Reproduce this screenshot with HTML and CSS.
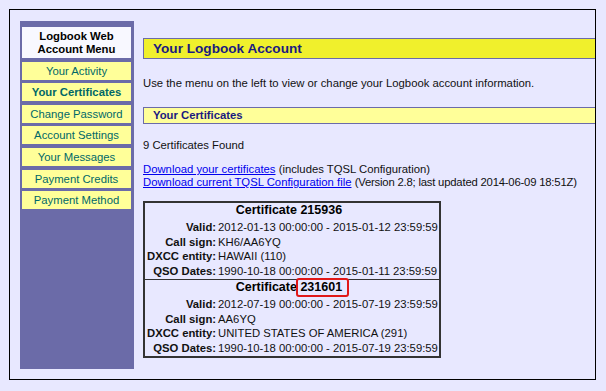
FILE: index.html
```html
<!DOCTYPE html>
<html lang="en">
<head>
  <meta charset="UTF-8">
  <meta name="viewport" content="width=device-width, initial-scale=1.0">
  <title>Your Logbook Account</title>
  <link rel="stylesheet" href="styles.css">
</head>
<body>

  <div class="page">

    <!-- Account menu -->
    <div class="sidebar">
      <div class="menu-title">Logbook Web<br>Account Menu</div>
      <a href="#" class="menu-item">Your Activity</a>
      <a href="#" class="menu-item current">Your Certificates</a>
      <a href="#" class="menu-item">Change Password</a>
      <a href="#" class="menu-item">Account Settings</a>
      <a href="#" class="menu-item">Your Messages</a>
      <a href="#" class="menu-item">Payment Credits</a>
      <a href="#" class="menu-item">Payment Method</a>
    </div>

    <!-- Main content -->
    <div class="main">
      <div class="page-title">Your Logbook Account</div>
      <p class="intro">Use the menu on the left to view or change your Logbook account information.</p>

      <div class="section-title">Your Certificates</div>
      <p class="found">9 Certificates Found</p>
      <p class="downloads">
        <a href="#">Download your certificates</a> (includes TQSL Configuration)<br>
        <a href="#">Download current TQSL Configuration file</a> <span class="version">(Version 2.8; last updated 2014-06-09 18:51Z)</span>
      </p>

      <table class="certs">
        <tr>
          <td>
            <div class="cert-title">Certificate 215936</div>
            <table class="cert-info">
              <tr><th>Valid:</th><td>2012-01-13 00:00:00 - 2015-01-12 23:59:59</td></tr>
              <tr><th>Call sign:</th><td>KH6/AA6YQ</td></tr>
              <tr><th>DXCC entity:</th><td>HAWAII (110)</td></tr>
              <tr><th>QSO Dates:</th><td>1990-10-18 00:00:00 - 2015-01-11 23:59:59</td></tr>
            </table>
          </td>
        </tr>
        <tr>
          <td class="next">
            <div class="cert-title">Certificate <span class="marked">231601</span></div>
            <table class="cert-info">
              <tr><th>Valid:</th><td>2012-07-19 00:00:00 - 2015-07-19 23:59:59</td></tr>
              <tr><th>Call sign:</th><td>AA6YQ</td></tr>
              <tr><th>DXCC entity:</th><td>UNITED STATES OF AMERICA (291)</td></tr>
              <tr><th>QSO Dates:</th><td>1990-10-18 00:00:00 - 2015-07-19 23:59:59</td></tr>
            </table>
          </td>
        </tr>
      </table>
    </div>

  </div>

</body>
</html>
```

FILE: styles.css
```css
/* General */
body {
  margin: 0;
  background: #E8E8FF;
  font-family: "Liberation Sans", Arial, sans-serif;
  font-size: 11.3px;
  line-height: 13px;
  color: #111;
}

p {
  margin: 0;
}

a {
  color: #0000EE;
}

/* Outer frame */
.page {
  display: flex;
  box-sizing: border-box;
  width: 587px;
  margin: 9px 0 0 9px;
  padding: 11px 0 10px 10px;
  border: 1px solid #000;
}

/* Account menu */
.sidebar {
  flex-shrink: 0;
  box-sizing: border-box;
  width: 114px;
  padding: 6px 3px 0 2px;
  background: #6B6BA8;
}

.menu-title {
  box-sizing: border-box;
  height: 31px;
  padding-top: 3px;
  background: #F8F8FF;
  color: #000;
  font-weight: bold;
  text-align: center;
}

.menu-item {
  display: block;
  height: 18px;
  line-height: 18px;
  margin-top: 3.6px;
  background: #FFFF99;
  color: #006868;
  text-align: center;
  text-decoration: none;
}

.menu-item.current {
  font-weight: bold;
}

/* Main column */
.main {
  flex: 1;
  padding: 17px 0 11px 9px;
}

.page-title {
  height: 19px;
  line-height: 19px;
  padding-left: 9px;
  background: #F0F02C;
  border: 1px solid #6B6BA8;
  border-right: none;
  color: #1A1A80;
  font-size: 13.6px;
  font-weight: bold;
}

.intro {
  margin-top: 18px;
}

.section-title {
  height: 15px;
  line-height: 15px;
  margin-top: 16.5px;
  padding-left: 9px;
  background: #FFFF99;
  border: 1px solid #6B6BA8;
  border-right: none;
  color: #1A1A80;
  font-weight: bold;
}

.found {
  margin-top: 15.5px;
}

.downloads {
  margin-top: 11.3px;
  white-space: nowrap;
}

.version {
  letter-spacing: -0.2px;
}

/* Certificate list */
.certs {
  margin-top: 12px;
  border: 2px solid #333;
  border-spacing: 0;
}

.certs > tbody > tr > td {
  padding: 0 0 1px 0;
}

.certs td.next {
  border-top: 1px solid #333;
}

.cert-title {
  height: 15px;
  line-height: 15px;
  margin-bottom: 2px;
  padding-right: 6px;
  font-size: 12.5px;
  font-weight: bold;
  text-align: center;
  color: #000;
}

.marked {
  position: relative;
}

/* red mark drawn over the number */
.marked::after {
  content: "";
  position: absolute;
  top: -2px;
  bottom: -3px;
  left: -4px;
  right: -7px;
  border: 2px solid #E01818;
  border-radius: 3px;
}

.cert-info {
  border-spacing: 0;
  line-height: 14.5px;
  white-space: nowrap;
}

.cert-info th {
  padding: 0 1px 0 2px;
  text-align: right;
  font-weight: bold;
}

.cert-info td {
  padding: 0 1px;
}
```
